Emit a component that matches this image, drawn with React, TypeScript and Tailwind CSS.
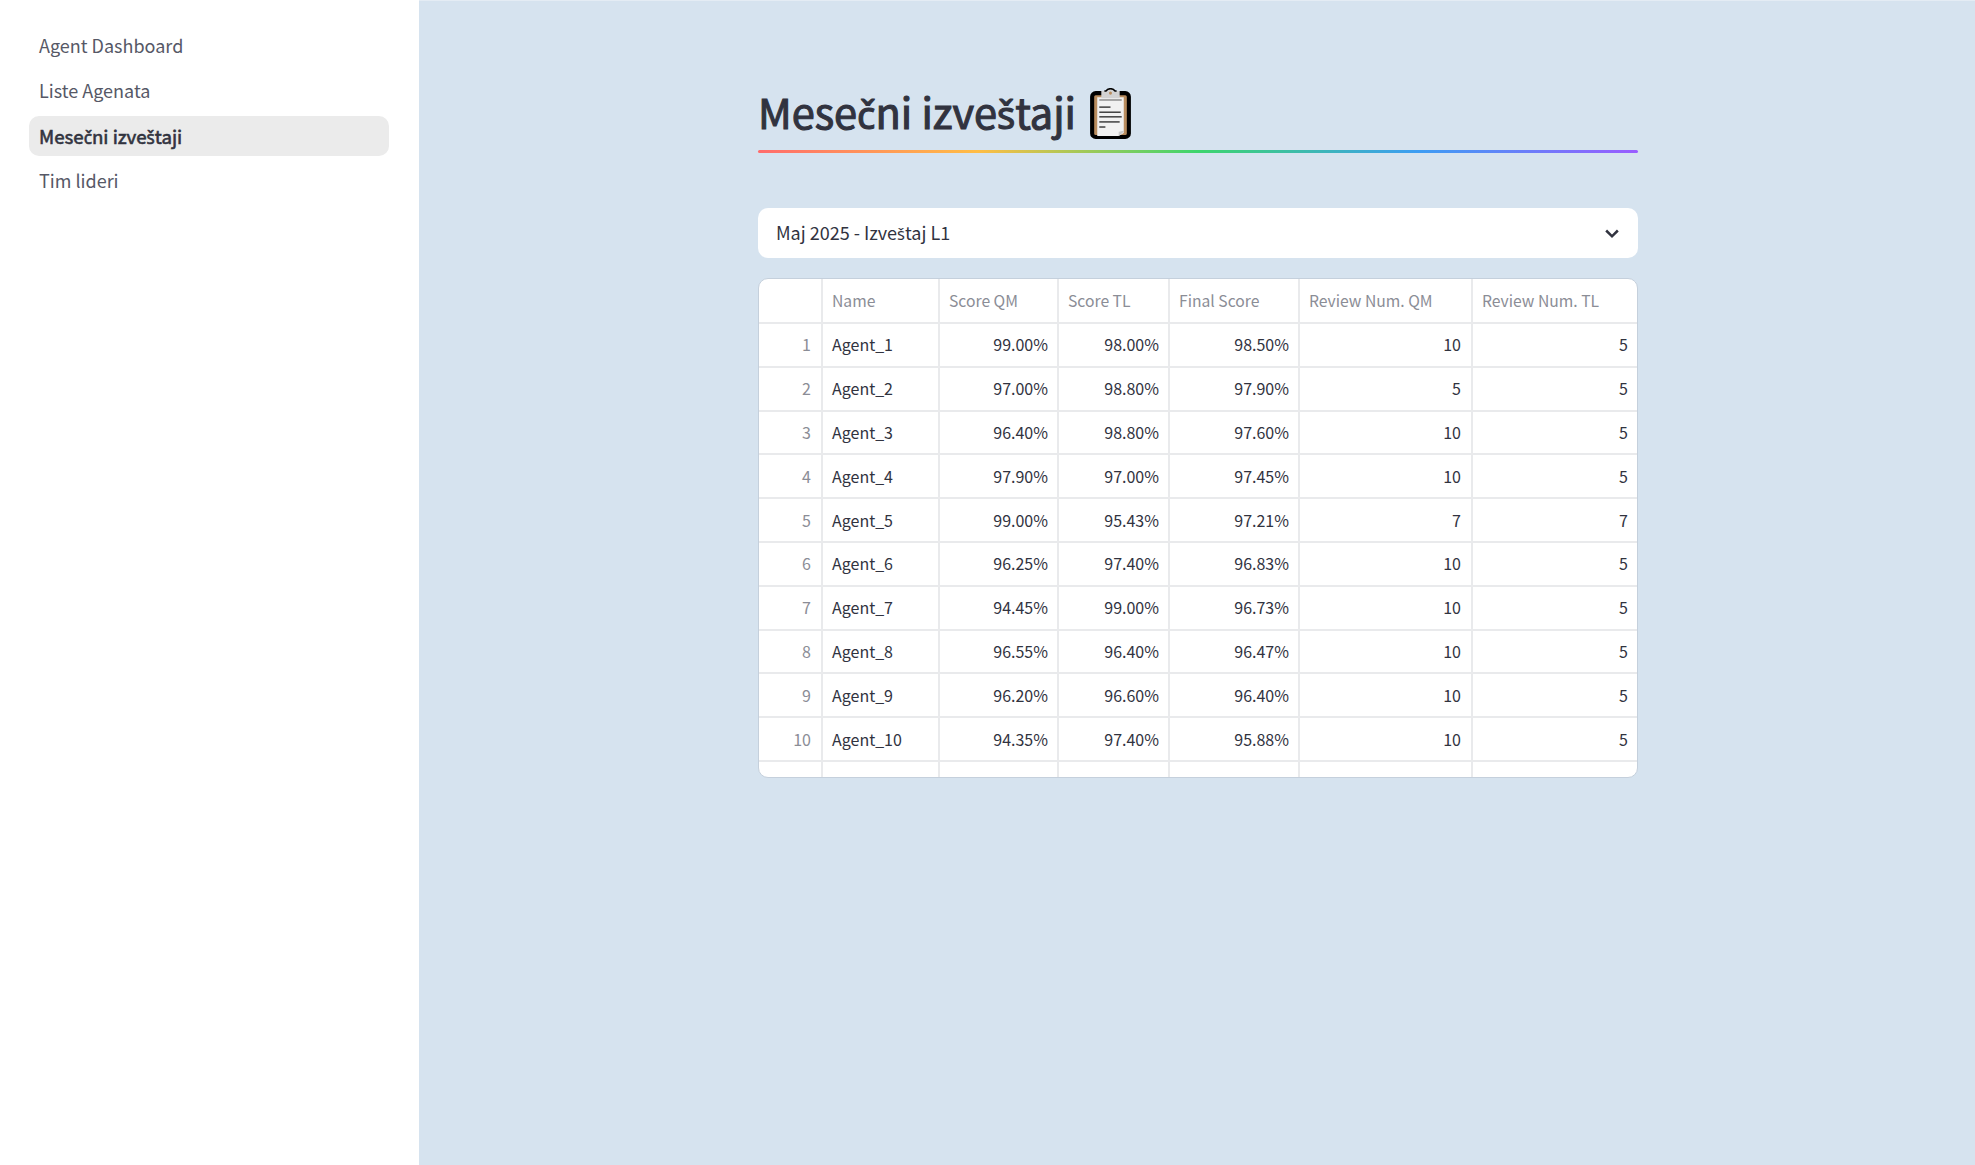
const font = { fontFamily: '"Noto Sans CJK SC", "Noto Sans", sans-serif' };

const navItems = ["Agent Dashboard", "Liste Agenata", "Mesečni izveštaji", "Tim lideri"];

const columns = [
  { label: "", width: "w-[63px]" },
  { label: "Name", width: "w-[117px]" },
  { label: "Score QM", width: "w-[119px]" },
  { label: "Score TL", width: "w-[111px]" },
  { label: "Final Score", width: "w-[130px]" },
  { label: "Review Num. QM", width: "w-[173px]" },
  { label: "Review Num. TL", width: "w-[166px]" },
];

const rows = [
  ["Agent_1", "99.00%", "98.00%", "98.50%", "10", "5"],
  ["Agent_2", "97.00%", "98.80%", "97.90%", "5", "5"],
  ["Agent_3", "96.40%", "98.80%", "97.60%", "10", "5"],
  ["Agent_4", "97.90%", "97.00%", "97.45%", "10", "5"],
  ["Agent_5", "99.00%", "95.43%", "97.21%", "7", "7"],
  ["Agent_6", "96.25%", "97.40%", "96.83%", "10", "5"],
  ["Agent_7", "94.45%", "99.00%", "96.73%", "10", "5"],
  ["Agent_8", "96.55%", "96.40%", "96.47%", "10", "5"],
  ["Agent_9", "96.20%", "96.60%", "96.40%", "10", "5"],
  ["Agent_10", "94.35%", "97.40%", "95.88%", "10", "5"],
];

// the CJK font has no č/š, so those letters come from Noto Sans at a matching x-height
const Accented = ({ text }: { text: string }) => (
  <>
    {text.split(/([čš])/).map((part, i) =>
      part === "č" || part === "š" ? (
        <span key={i} className="font-['Noto_Sans'] text-[0.92em]">
          {part}
        </span>
      ) : (
        part
      )
    )}
  </>
);

const ClipboardIcon = () => (
  <svg viewBox="0 0 40 50" className="w-[41px] h-[51px] shrink-0">
    <rect x="2" y="5" width="36" height="43" rx="3.5" fill="#b98d5f" stroke="#000" strokeWidth="4" />
    <path d="M7 9h26v35l-5 3H7z" fill="#f1f1f1" />
    <path d="M28 47l5-4v-1l-5 1z" fill="#c9c9c9" />
    <path d="M11 3c1.500 0 3 0 4 0 1-2 3-2.500 5-2.500s4 .5 5 2.500c1 0 3 0 4 0v7H11z" fill="#d2d2d2" />
    <path d="M14 3h1.500c1-1.500 2.500-2.300 4.500-2.300s3.500.8 4.500 2.300H26" fill="none" stroke="#000" strokeWidth="1.500" />
    <rect x="18.500" y="3.500" width="3" height="3" rx="1.500" fill="#b98d5f" />
    <rect x="9" y="11" width="22" height="1.500" fill="#8f8f8f" />
    <rect x="9" y="18" width="11" height="1.500" fill="#444" />
    <rect x="9" y="23" width="21" height="1.500" fill="#444" />
    <rect x="9" y="27.500" width="22" height="1.500" fill="#444" />
    <rect x="9" y="32.500" width="20" height="1.500" fill="#444" />
    <rect x="9" y="37.500" width="6" height="1.500" fill="#444" />
  </svg>
);

const Sidebar = () => (
  <aside className="w-[419px] shrink-0 bg-white pl-[29px] pr-[30px] pt-[26px]">
    <nav className="flex flex-col gap-[5px]">
      {navItems.map((item) => (
        <div
          key={item}
          className={
            item === "Mesečni izveštaji"
              ? "h-[40px] rounded-[10px] bg-[#ebebeb] px-[10px] flex items-center text-[18.700px] [-webkit-text-stroke:0.6px_#31333f] text-[#31333f]"
              : "h-[40px] rounded-[10px] px-[10px] pb-[2px] flex items-center text-[18px] text-[#565866]"
          }
        >
          <span>
            <Accented text={item} />
          </span>
        </div>
      ))}
    </nav>
  </aside>
);

const ReportTable = () => (
  <div className="mt-[20px] h-[500px] rounded-[10px] border border-[#c5d0dc] bg-white overflow-hidden">
    <table className="table-fixed w-[879px] border-collapse text-[16px] text-[#31333f]">
      <thead>
        <tr className="h-[44px]">
          {columns.map((col) => (
            <th
              key={col.label}
              className={`${col.width} border-r-2 border-b-2 border-[#e9eaec] px-[9px] text-left text-[15.700px] font-normal text-[#8b8d96] last:border-r-0`}
            >
              {col.label}
            </th>
          ))}
        </tr>
      </thead>
      <tbody>
        {rows.map((row, i) => (
          <tr key={row[0]} className="h-[43.800px]">
            <td className="border-r-2 border-b-2 border-[#e9eaec] pl-[9px] pr-[10px] pb-[1px] text-right text-[#8b8d96]">{i + 1}</td>
            {row.map((cell, j) => (
              <td
                key={j}
                className={
                  j === 0
                    ? "border-r-2 border-b-2 border-[#e9eaec] px-[9px] pb-[1px] text-left"
                    : j >= 4
                      ? "border-r-2 border-b-2 border-[#e9eaec] pl-[9px] pr-[10px] pb-[1px] text-right last:border-r-0"
                      : "border-r-2 border-b-2 border-[#e9eaec] px-[9px] pb-[1px] text-right"
                }
              >
                {cell}
              </td>
            ))}
          </tr>
        ))}
        <tr className="h-[16px]">
          {columns.map((col) => (
            <td key={col.label} className="border-r-2 border-[#e9eaec] last:border-r-0" />
          ))}
        </tr>
      </tbody>
    </table>
  </div>
);

export default function App() {
  return (
    <div className="flex h-screen overflow-hidden" style={font}>
      <Sidebar />
      <main className="flex-1 bg-[#d6e3ef] border-t border-[#e4ecf4]">
        <div className="ml-[339px] w-[880px] pt-[84px]">
          <div className="flex items-center gap-[14px] h-[56px]">
            <h1 className="text-[41.500px] leading-none pb-[2px] font-normal [-webkit-text-stroke:1.1px_#31333f] text-[#31333f]">
              <Accented text="Mesečni izveštaji" />
            </h1>
            <ClipboardIcon />
          </div>
          <div className="mt-[9px] h-[3px] rounded-full bg-[linear-gradient(to_right,#ff6c6c,#ffbd45,#3dd56d,#3d9df3,#9a5dff)]" />
          <div className="mt-[55px] h-[50px] rounded-[10px] bg-white pl-[18px] pr-[16px] flex items-center justify-between text-[18px] text-[#31333f]">
            <span>
              <Accented text="Maj 2025 - Izveštaj L1" />
            </span>
            <svg viewBox="0 0 24 24" className="w-[20px] h-[20px]" fill="none" stroke="#31333f" strokeWidth="3">
              <path d="M5 9l7 7 7-7" />
            </svg>
          </div>
          <ReportTable />
        </div>
      </main>
    </div>
  );
}
